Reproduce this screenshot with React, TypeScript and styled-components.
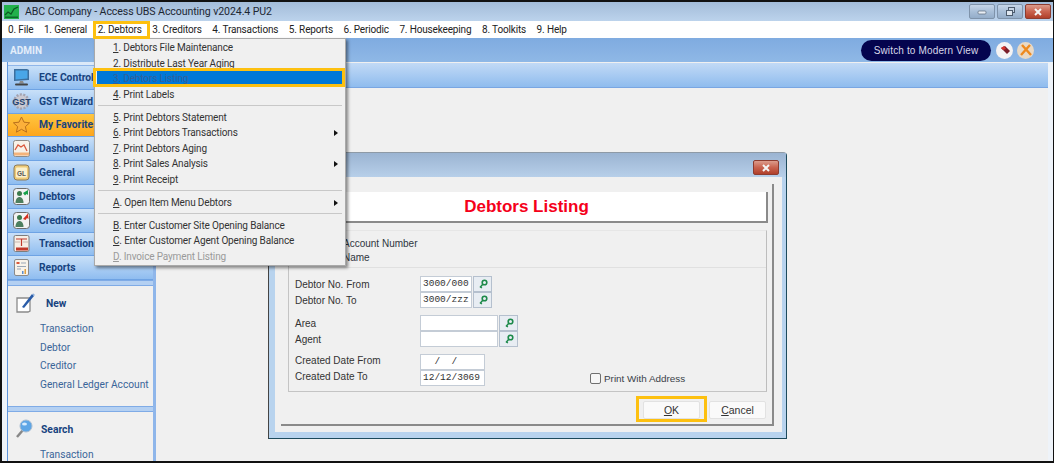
import React from "react";
import styled, { createGlobalStyle } from "styled-components";

const Global = createGlobalStyle`
  html, body { margin: 0; padding: 0; background: #fff; }
  * { box-sizing: border-box; }
  #root { width: 1056px; height: 464px; overflow: hidden; }
`;
const UI = `Roboto, "Open Sans", sans-serif`;
const Shell = styled.div`
  position: relative; width: 1054px; height: 463px; border: 2px solid #111; border-right-width: 1px;
  background: #eef3f9; display: flex; flex-direction: column; overflow: hidden; font-family: ${UI};
`;
const TitleBar = styled.div`
  height: 19px; flex: none; display: flex; align-items: center; padding: 0 2px 0 2px;
  background: linear-gradient(#a3bcd9, #bcd3ec); font-size: 10.6px; letter-spacing: -.1px; color: #1d2733;
`;
const TitleText = styled.span` margin-left: 6px; white-space: nowrap; `;
const WinButtons = styled.div` margin-left: auto; display: flex; gap: 2px; `;
const WinBtn = styled.div<{ $close?: boolean }>`
  width: 26px; height: 15px; border-radius: 2px; border: 1px solid ${p => p.$close ? "#8c3c30" : "#7f93aa"};
  background: ${p => p.$close ? "linear-gradient(#dc9c8c 0%, #c9634f 50%, #b03f2a 100%)" : "linear-gradient(#c6d6e8 0%, #a9bfd8 50%, #94adc9 100%)"};
  display: flex; align-items: center; justify-content: center;
`;
const MenuBar = styled.div`
  height: 17px; flex: none; background: #fff; display: flex; align-items: center; padding-left: 6px; gap: 10.5px;
  font-size: 10px; letter-spacing: -.15px; color: #222; white-space: nowrap;
`;
const AdminBar = styled.div`
  height: 24px; flex: none; background: linear-gradient(#7fabe0, #8fb8e6); display: flex; align-items: center; padding: 0 19px 0 8px;
  color: #e4eefa; font-weight: 700; font-size: 10px;
`;
const SwitchBtn = styled.div`
  margin-left: auto; width: 130px; height: 21px; border-radius: 11px; background: #04044e; color: #d8d8ea;
  display: flex; align-items: center; justify-content: center; font: 10px "Liberation Sans", sans-serif; letter-spacing: .15px;
`;
const RoundIcon = styled.div<{ $first?: boolean }>`
  width: 17px; height: 17px; margin-left: ${p => p.$first ? "5px" : "4px"}; border-radius: 50%; background: ${p => p.$first ? "#f5f3f3" : "#e9d9c4"};
  display: flex; align-items: center; justify-content: center;
`;
const Body = styled.div` flex: 1; display: flex; padding: 0 5px 0 5px; min-height: 0; `;
const Sidebar = styled.aside`
  width: 149px; flex: none; display: flex; flex-direction: column; background: #f0f0f0;
  border-left: 1px solid #5f95dc; border-right: 3px solid #8fb6ea; overflow: hidden;
`;
const NavItem = styled.div<{ $active?: boolean }>`
  height: 23.8px; flex: none; display: flex; align-items: center; gap: 8px; padding-left: 4px;
  background: ${p => p.$active ? "linear-gradient(#ffc640, #fda51d)" : "linear-gradient(#c9e0f8, #8fbdf0)"};
  border-bottom: 1px solid #6ea3e4; color: #17437f; font-weight: 700; font-size: 10.3px; white-space: nowrap; overflow: hidden;
`;
const NavTop = styled.div` height: 4px; flex: none; background: #dce9f8; border-bottom: 1px solid #8fb6ea; `;
const IconBox = styled.div` width: 19px; height: 19px; flex: none; display: flex; align-items: center; justify-content: center; `;
const Divider = styled.div<{ $h: number }>`
  height: ${p => p.$h}px; flex: none; background: #b4d0f2; border-top: 1px solid #7fabe6; border-bottom: 1px solid #7fabe6;
`;
const Panel = styled.section<{ $h: number; $top: number }>`
  height: ${p => p.$h}px; flex: none; display: flex; flex-direction: column; padding: ${p => p.$top}px 0 0 7px;
`;
const PanelHead = styled.div<{ $gap: number }>`
  display: flex; align-items: center; gap: ${p => p.$gap}px; height: 22px; color: #17437f; font-weight: 700; font-size: 10.3px; margin-bottom: 5px;
`;
const SideLink = styled.div`
  height: 18.7px; flex: none; display: flex; align-items: center; padding-left: 25px; color: #3a6599; font-size: 10.2px; white-space: nowrap;
`;
const Main = styled.main`
  position: relative; flex: 1; background: #f0f0f0; display: flex; flex-direction: column;
`;
const MainHead = styled.div`
  height: 25px; margin-top: 1px; flex: none; background: linear-gradient(#c2daf6, #8fbcee); border-bottom: 1px solid #79a6e2;
`;
const Dialog = styled.div`
  position: absolute; left: 112px; top: 90px; width: 519px; height: 287px; border: 1px solid #1d4a5c; border-top-color: #8e9aa6; border-left-color: #444;
  border-radius: 4px 4px 0 0; background: #b8d3ee; display: flex; flex-direction: column;
`;
const DialogTitle = styled.div`
  height: 24px; flex: none; background: linear-gradient(#9bb4d2, #b7cfe9); display: flex; justify-content: flex-end; padding: 7px 7px 0 0;
`;
const DialogBody = styled.div`
  flex: 1; margin: 0 4px 6px 6px; background: #f0f0f0; padding: 7px 8px 0 6px; display: flex; flex-direction: column;
`;
const Bevel = styled.div`
  height: 242px; flex: none; border-right: 2px solid #8a8a8a; border-bottom: 2px solid #8a8a8a; padding: 8px 5px 0 7px; display: flex; flex-direction: column;
`;
const Banner = styled.div`
  height: 31px; flex: none; background: #fff; border-right: 2px solid #8a8a8a; border-bottom: 2px solid #8a8a8a; color: #f5001a;
  display: flex; align-items: center; justify-content: center; padding: 1px 0 0 6px; font: 700 17px "Liberation Sans", sans-serif; margin: 0 -1px 0 -7px;
`;
const Group = styled.div`
  margin-top: 7px; height: 162px; flex: none; border: 1px solid #c4c4c4; border-top-color: #e6e6e6; border-right-color: #bdbdbd; display: flex; flex-direction: column;
  font: 10px "Liberation Sans", sans-serif; color: #333;
`;
const RadioRow = styled.div`
  height: 37px; flex: none; border-bottom: 1px solid #e0e0e0; padding: 6px 0 0 54px; display: flex; flex-direction: column; line-height: 14px; color: #2f3640;
`;
const Fields = styled.div`
  flex: 1; padding: 8px 0 0 6px; display: flex; flex-direction: column;
`;
const FieldRow = styled.div<{ $gap?: number }>`
  display: flex; align-items: center; height: 16px; margin-top: ${p => p.$gap ?? 0}px;
`;
const Label = styled.div<{ $raise?: boolean }>` width: 125px; flex: none; padding-bottom: ${p => p.$raise ? "3px" : "0"}; `;
const Input = styled.div<{ $w: number }>`
  width: ${p => p.$w}px; height: 16px; background: #fff; border: 1px solid #c4ccd6; padding-left: 2px;
  font: 9.5px/14px "Liberation Mono", monospace; color: #333; white-space: pre;
`;
const Lookup = styled.div`
  width: 19px; height: 16px; margin-left: 1px; background: #e8edf3; border: 1px solid #b5c0ce; display: flex; align-items: center; justify-content: center;
`;
const PrintAddr = styled.label`
  margin-left: 105px; display: flex; align-items: center; gap: 3px; color: #3a3f48; font-size: 9.9px;
`;
const CheckBox = styled.span`
  width: 11px; height: 11px; border: 1px solid #6f6f6f; border-radius: 2px; background: #f6f6f6; display: block;
`;
const Actions = styled.div`
  display: flex; justify-content: flex-end; gap: 9px; margin: 9px 1px 0 0;
`;
const Btn = styled.div`
  width: 57px; height: 18px; background: #fafafa; border: 1px solid #e2e2e2; border-radius: 2px; display: flex; align-items: center; justify-content: center;
  font: 10.5px "Liberation Sans", sans-serif; color: #333;
`;
const U = styled.span` text-decoration: underline; `;
const Menu = styled.div`
  position: absolute; left: 92px; top: 36px; width: 252px; height: 228px; background: #f0f0f0; border: 1px solid #a9a9a9; padding: 0 2px;
  box-shadow: 2px 2px 3px rgba(0,0,0,.45); font-size: 10px; letter-spacing: -.15px; color: #333; z-index: 5; display: flex; flex-direction: column;
`;
const MenuItem = styled.div<{ $sel?: boolean; $off?: boolean }>`
  height: 15.5px; flex: none; position: relative; display: flex; align-items: center; padding-left: 16px; white-space: nowrap;
  background: ${p => p.$sel ? "#0078d7" : "transparent"}; color: ${p => p.$sel ? "#33609a" : p.$off ? "#9a9a9a" : "#333"};
`;
const MenuPad = styled.div` height: 1px; flex: none; `;
const Sep = styled.div` height: 1px; margin: 3px 1px 3.5px; background: #c8c8c8; flex: none; `;
const Arrow = styled.i`
  position: absolute; right: 5px; top: 5px; width: 0; height: 0; border-left: 4px solid #111; border-top: 3px solid transparent; border-bottom: 3px solid transparent;
`;
const Callout = styled.div<{ $l: number; $t: number; $w: number; $h: number }>`
  position: absolute; left: ${p => p.$l}px; top: ${p => p.$t}px; width: ${p => p.$w}px; height: ${p => p.$h}px;
  border: 3px solid #fdc010; z-index: 9; pointer-events: none;
`;

const Key = () => (
  <svg width="10" height="10" viewBox="0 0 10 10"><circle cx="6.500" cy="3.500" r="2.300" fill="none" stroke="#1d8a4a" strokeWidth="1.600"/><path d="M5 5 2 8.500M2.500 8l1.400 1" stroke="#1d8a4a" strokeWidth="1.500" fill="none"/></svg>
);
const Ico = {
  ece: <svg width="19" height="19" viewBox="0 0 19 19"><path d="M2 1h13l2 1v10l-15 1z" fill="#3d6f9e"/><path d="M3.500 2.500h12v8l-12 1z" fill="#49a6e8"/><path d="M8 13h3l1 2.500H7z" fill="#8a8a8a"/><rect x="3" y="15.500" width="13" height="2" rx="1" fill="#444"/></svg>,
  gst: <svg width="20" height="19" viewBox="0 0 20 19"><circle cx="10" cy="9.500" r="7.500" fill="#c9c9d2" stroke="#a3a3b0" strokeWidth="2.500" strokeDasharray="2.200 1.500"/><text x="10" y="13" textAnchor="middle" fontSize="9.500" fontWeight="700" fontFamily="Liberation Sans" fill="#24436e">GST</text></svg>,
  star: <svg width="19" height="19" viewBox="0 0 19 19"><path d="M9.500 2 12 7.200l5.600.6-4.200 3.800 1.200 5.600-5.100-2.900-5.100 2.900 1.200-5.600L1.400 7.800 7 7.200z" fill="#fbb03b" stroke="#b9701c" strokeWidth="1"/></svg>,
  dash: <svg width="19" height="19" viewBox="0 0 19 19"><rect x="1.500" y="1.500" width="16" height="16" rx="2" fill="#f7f1e8" stroke="#8d8a86"/><path d="M3 11l3-5 3 2 3-2 3 6" fill="none" stroke="#d9583c" strokeWidth="1.300"/><rect x="2" y="13.500" width="15" height="3" fill="#f4b37a"/></svg>,
  gl: <svg width="19" height="19" viewBox="0 0 19 19"><rect x="2" y="2" width="15" height="15" rx="3" fill="#eecb78" stroke="#8a7a5c"/><rect x="4" y="4.500" width="11" height="10" rx="1" fill="#fbf1cd"/><text x="9.500" y="12.500" textAnchor="middle" fontSize="6.500" fontWeight="700" fontFamily="Liberation Sans" fill="#555">GL</text></svg>,
  deb: <svg width="19" height="19" viewBox="0 0 19 19"><rect x="1.500" y="1.500" width="16" height="16" rx="3" fill="#f2f2f2" stroke="#6d6d6d"/><circle cx="7.500" cy="6.500" r="2.500" fill="#3c7a4c"/><path d="M3.500 16c0-4 2-6 4-6s4 2 4 6z" fill="#4d7f5f"/><path d="M11 6l5-3v5l-1.500-1-1.500 1.500z" fill="#18a04a"/></svg>,
  cre: <svg width="19" height="19" viewBox="0 0 19 19"><rect x="1.500" y="1.500" width="16" height="16" rx="3" fill="#f2f2f2" stroke="#6d6d6d"/><circle cx="7.500" cy="6.500" r="2.500" fill="#3c7a4c"/><path d="M3.500 16c0-4 2-6 4-6s4 2 4 6z" fill="#4d7f5f"/><path d="M11 8l5-5.500.5 5.500-1.500-1-1.500 2z" fill="#d7301f"/></svg>,
  trn: <svg width="19" height="19" viewBox="0 0 19 19"><rect x="2" y="1.500" width="15" height="16" rx="1.500" fill="#f6efe6" stroke="#7d7d7d"/><path d="M4 5h11M9.500 5v7" stroke="#c0392b" strokeWidth="1.200"/><path d="M3 8h5M11 8h5" stroke="#c9b8b0"/><rect x="4" y="13.500" width="12" height="3" fill="#c0392b"/></svg>,
  rep: <svg width="19" height="19" viewBox="0 0 19 19"><rect x="2.500" y="1.500" width="14" height="16" rx="1.500" fill="#f8f3ea" stroke="#8a8a8a"/><rect x="4.500" y="4" width="3" height="2" fill="#d9583c"/><path d="M9 5h5M5 8.500h9M5 11h4" stroke="#9aa7b6"/><rect x="10" y="13" width="1.500" height="3" fill="#5b8fd0"/><rect x="12.500" y="11" width="1.500" height="5" fill="#e0a040"/></svg>,
  nw: <svg width="24" height="22" viewBox="0 0 24 22"><path d="M2 6h13v13l-2 1H2z" fill="#fff" stroke="#8a8a8a" strokeWidth="1.300"/><path d="M7 15l2 1 10-12-2-2z" fill="#2a5ca8"/><path d="M17 2l2 2 1-1-1.500-1.500z" fill="#8fb2dd"/></svg>,
  sr: <svg width="20" height="22" viewBox="0 0 20 22"><path d="M8 12 2 19" stroke="#888" strokeWidth="2.500"/><circle cx="11" cy="8" r="6" fill="#5ea6e6" stroke="#a9bcd0"/><ellipse cx="9.500" cy="6" rx="2.500" ry="1.500" fill="#d7ecff"/></svg>,
};
const nav: [string, React.ReactNode, boolean?][] = [
  ["ECE Control", Ico.ece], ["GST Wizard", Ico.gst], ["My Favorites", Ico.star, true], ["Dashboard", Ico.dash], ["General", Ico.gl],
  ["Debtors", Ico.deb], ["Creditors", Ico.cre], ["Transactions", Ico.trn], ["Reports", Ico.rep],
];
const menuBar = ["0. File", "1. General", "2. Debtors", "3. Creditors", "4. Transactions", "5. Reports", "6. Periodic", "7. Housekeeping", "8. Toolkits", "9. Help"];
type MI = { k: string; t: string; arrow?: boolean; sel?: boolean; off?: boolean } | "sep";
const menu: MI[] = [
  { k: "1", t: ". Debtors File Maintenance" }, { k: "2", t: ". Distribute Last Year Aging" }, { k: "3", t: ". Debtors Listing", sel: true }, { k: "4", t: ". Print Labels" }, "sep",
  { k: "5", t: ". Print Debtors Statement" }, { k: "6", t: ". Print Debtors Transactions", arrow: true }, { k: "7", t: ". Print Debtors Aging" }, { k: "8", t: ". Print Sales Analysis", arrow: true }, { k: "9", t: ". Print Receipt" }, "sep",
  { k: "A", t: ". Open Item Menu Debtors", arrow: true }, "sep",
  { k: "B", t: ". Enter Customer Site Opening Balance" }, { k: "C", t: ". Enter Customer Agent Opening Balance" }, { k: "D", t: ". Invoice Payment Listing", off: true },
];
const CloseX = () => <svg width="10" height="8" viewBox="0 0 10 8"><path d="M2 1l6 6M8 1 2 7" stroke="#f4f4f4" strokeWidth="2"/></svg>;

export default function App() {
  return (
    <Shell>
      <Global />
      <TitleBar>
        <svg width="15" height="14" viewBox="0 0 15 14"><rect width="15" height="14" fill="#22b14c"/><path d="M1 10l3-3 3 2 3-5 4-2" fill="none" stroke="#0b5a24" strokeWidth="1.300"/><rect x="1" y="11.500" width="13" height="1.500" fill="#0c6b2a"/></svg>
        <TitleText>ABC Company - Access UBS Accounting v2024.4 PU2</TitleText>
        <WinButtons>
          <WinBtn><svg width="10" height="6" viewBox="0 0 10 6"><rect x="1" y="2" width="8" height="3" rx="1" fill="#e9eef5" stroke="#59687a" strokeWidth=".7"/></svg></WinBtn>
          <WinBtn><svg width="11" height="10" viewBox="0 0 11 10"><rect x="3.500" y=".5" width="6" height="5" fill="#c6d4e4" stroke="#4d5c6e"/><rect x="1.500" y="3.500" width="6" height="5" fill="#dfe7f0" stroke="#4d5c6e"/></svg></WinBtn>
          <WinBtn $close><CloseX /></WinBtn>
        </WinButtons>
      </TitleBar>
      <MenuBar>{menuBar.map(m => <span key={m}>{m}</span>)}</MenuBar>
      <AdminBar>
        ADMIN
        <SwitchBtn>Switch to Modern View</SwitchBtn>
        <RoundIcon $first><svg width="12" height="12" viewBox="0 0 12 12"><path d="M2 4l4-2 5 5-3 3z" fill="#7a1e2a"/><path d="M2 4l3-2 2 3-3 1z" fill="#d9352b"/></svg></RoundIcon>
        <RoundIcon><svg width="14" height="14" viewBox="0 0 14 14"><path d="M3 2l9 10M11 2 2 12" stroke="#ee8a1e" strokeWidth="2.400"/></svg></RoundIcon>
      </AdminBar>
      <Body>
        <Sidebar>
          <NavTop />
          {nav.map(([t, i, a]) => <NavItem key={t} $active={a}><IconBox>{i}</IconBox>{t}</NavItem>)}
          <Divider $h={6} />
          <Panel $h={120} $top={6}>
            <PanelHead $gap={7}>{Ico.nw}New</PanelHead>
            <SideLink>Transaction</SideLink><SideLink>Debtor</SideLink><SideLink>Creditor</SideLink><SideLink>General Ledger Account</SideLink>
          </Panel>
          <Divider $h={6} />
          <Panel $h={60} $top={6}>
            <PanelHead $gap={6}>{Ico.sr}Search</PanelHead>
            <SideLink>Transaction</SideLink>
          </Panel>
        </Sidebar>
        <Main>
          <MainHead />
          <Dialog>
            <DialogTitle>
              <WinBtn $close><CloseX /></WinBtn>
            </DialogTitle>
            <DialogBody>
              <Bevel>
                <Banner>Debtors Listing</Banner>
                <Group>
                  <RadioRow><span>Account Number</span><span>Name</span></RadioRow>
                  <Fields>
                    <FieldRow><Label>Debtor No. From</Label><Input $w={52}>3000/000</Input><Lookup><Key /></Lookup></FieldRow>
                    <FieldRow><Label>Debtor No. To</Label><Input $w={52}>3000/zzz</Input><Lookup><Key /></Lookup></FieldRow>
                    <FieldRow $gap={7}><Label>Area</Label><Input $w={78} /><Lookup><Key /></Lookup></FieldRow>
                    <FieldRow><Label>Agent</Label><Input $w={78} /><Lookup><Key /></Lookup></FieldRow>
                    <FieldRow $gap={7}><Label $raise>Created Date From</Label><Input $w={65}>{"  /  /"}</Input></FieldRow>
                    <FieldRow><Label $raise>Created Date To</Label><Input $w={65}>12/12/3069</Input><PrintAddr><CheckBox />Print With Address</PrintAddr></FieldRow>
                  </Fields>
                </Group>
                <Actions>
                  <Btn><span><U>O</U>K</span></Btn>
                  <Btn><span><U>C</U>ancel</span></Btn>
                </Actions>
              </Bevel>
            </DialogBody>
          </Dialog>
        </Main>
      </Body>
      <Menu>
        <MenuPad />
        {menu.map((m, i) => m === "sep" ? <Sep key={i} /> : (
          <MenuItem key={m.k} $sel={m.sel} $off={m.off}><span><U>{m.k}</U>{m.t}</span>{m.arrow && <Arrow />}</MenuItem>
        ))}
      </Menu>
      <Callout $l={91} $t={19} $w={57} $h={18} />
      <Callout $l={91} $t={66} $w={252} $h={19} />
      <Callout $l={634} $t={394} $w={71} $h={26} />
    </Shell>
  );
}
